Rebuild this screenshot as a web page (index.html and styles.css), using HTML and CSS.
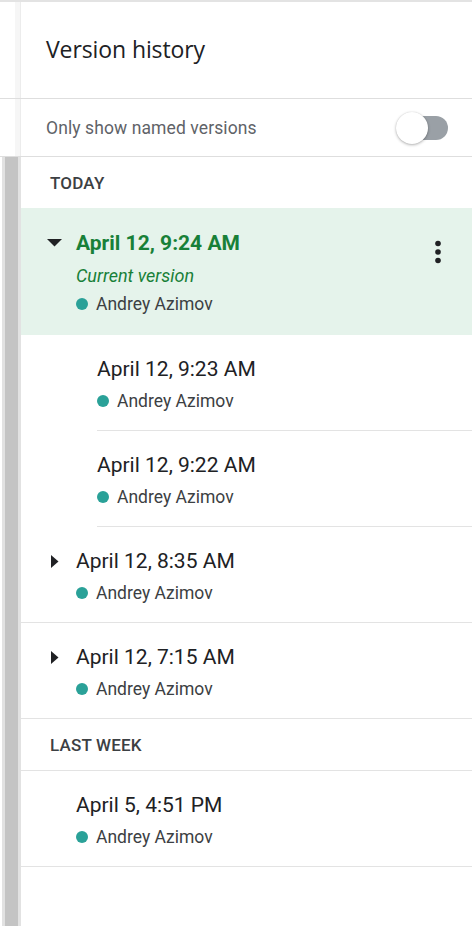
FILE: index.html
```html
<!DOCTYPE html>
<html>
<head>
<meta charset="utf-8">
<link rel="stylesheet" href="styles.css">
</head>
<body>
<div class="page">
  <header class="title-bar">
    <h1 class="title">Version history</h1>
  </header>
  <div class="filter-bar">
    <span class="filter-label">Only show named versions</span>
    <span class="switch"><span class="switch-track"></span><span class="switch-thumb"></span></span>
  </div>
  <div class="body">
    <div class="scroll"></div>
    <div class="list">
      <div class="section first">TODAY</div>

      <div class="row selected">
        <span class="caret down"><svg width="15" height="8" viewBox="0 0 15 8"><polygon points="0,0 15,0 7.5,7.5" fill="#202124"/></svg></span>
        <div class="info">
          <div class="date">April 12, 9:24 AM</div>
          <div class="current">Current version</div>
          <div class="author"><span class="dot"></span>Andrey Azimov</div>
        </div>
        <span class="kebab"><svg width="6" height="24" viewBox="0 0 6 24"><circle cx="3" cy="3.5" r="2.8" fill="#202124"/><circle cx="3" cy="12" r="2.8" fill="#202124"/><circle cx="3" cy="20.5" r="2.8" fill="#202124"/></svg></span>
      </div>

      <div class="row sub">
        <div class="info">
          <div class="date">April 12, 9:23 AM</div>
          <div class="author"><span class="dot"></span>Andrey Azimov</div>
        </div>
      </div>
      <div class="row sub">
        <div class="info">
          <div class="date">April 12, 9:22 AM</div>
          <div class="author"><span class="dot"></span>Andrey Azimov</div>
        </div>
      </div>

      <div class="row bordered">
        <span class="caret right"><svg width="8" height="13" viewBox="0 0 8 13"><polygon points="0,0 7.5,6.5 0,13" fill="#202124"/></svg></span>
        <div class="info">
          <div class="date">April 12, 8:35 AM</div>
          <div class="author"><span class="dot"></span>Andrey Azimov</div>
        </div>
      </div>
      <div class="row bordered">
        <span class="caret right"><svg width="8" height="13" viewBox="0 0 8 13"><polygon points="0,0 7.5,6.5 0,13" fill="#202124"/></svg></span>
        <div class="info">
          <div class="date">April 12, 7:15 AM</div>
          <div class="author"><span class="dot"></span>Andrey Azimov</div>
        </div>
      </div>

      <div class="section bordered">LAST WEEK</div>

      <div class="row bordered">
        <span class="caret"></span>
        <div class="info">
          <div class="date">April 5, 4:51 PM</div>
          <div class="author"><span class="dot"></span>Andrey Azimov</div>
        </div>
      </div>
    </div>
  </div>
</div>
</body>
</html>
```

FILE: styles.css
```css
* { box-sizing: border-box; }
html, body { margin: 0; padding: 0; background: #fff; }
body {
  font-family: Roboto, "Liberation Sans", Arial, sans-serif;
  color: #202124;
  width: 472px;
  height: 926px;
  overflow: hidden;
}
.page {
  display: flex;
  flex-direction: column;
  height: 926px;
  border-top: 2px solid #e3e3e3;
}
.title-bar {
  height: 97px;
  flex: none;
  display: flex;
  align-items: center;
  padding-left: 46px;
  padding-bottom: 3px;
  border-bottom: 1px solid #dedede;
  background: linear-gradient(to right, #fff 0 15px, #f6f6f6 15px 20px, #ececec 20px 21px, #fff 21px);
}
.title {
  margin: 0;
  font-family: "Open Sans", Roboto, sans-serif;
  font-weight: 400;
  font-size: 23px;
  line-height: 28px;
  color: #202124;
  letter-spacing: -0.1px;
}
.filter-bar {
  height: 58px;
  flex: none;
  display: flex;
  align-items: center;
  justify-content: space-between;
  padding: 0 24px 0 46px;
  border-bottom: 1px solid #dedede;
  background: linear-gradient(to right, #fff 0 15px, #f6f6f6 15px 20px, #ececec 20px 21px, #fff 21px);
}
.filter-label {
  font-size: 17.5px;
  color: #5f6368;
  letter-spacing: 0.1px;
}
.switch {
  position: relative;
  width: 52px;
  height: 32px;
  display: block;
}
.switch-track {
  position: absolute;
  left: 12px;
  top: 4px;
  width: 40px;
  height: 24px;
  border-radius: 12px;
  background: #9aa0a6;
}
.switch-thumb {
  position: absolute;
  left: 0;
  top: 0;
  width: 32px;
  height: 32px;
  border-radius: 50%;
  background: #fff;
  box-shadow: 0 1px 3px rgba(0,0,0,0.3), 0 0 1px rgba(0,0,0,0.15);
}
.body {
  flex: 1;
  display: flex;
}
.scroll {
  width: 21px;
  flex: none;
  background: linear-gradient(to right, #fff 0 2px, #e2e2e2 2px 5px, #c4c4c4 5px 18px, #e2e2e2 18px 21px);
}
.list {
  flex: 1;
  display: flex;
  flex-direction: column;
}
.section {
  height: 52px;
  display: flex;
  align-items: center;
  padding-left: 29px;
  font-size: 17px;
  font-weight: 500;
  color: #3c4043;
  letter-spacing: 0.2px;
}
.section.first { height: 51px; }
.bordered { border-bottom: 1px solid #e3e3e3; }
.row {
  display: flex;
  align-items: flex-start;
  padding: 20px 0 0 25px;
  height: 96px;
  flex: none;
}
.row.selected {
  height: 127px;
  background: #e5f3eb;
  padding-right: 24px;
}
.row.sub {
  margin-left: 76px;
  padding-left: 0;
  border-bottom: 1px solid #e3e3e3;
}
.caret {
  width: 30px;
  height: 28px;
  flex: none;
  display: flex;
  align-items: center;
}
.caret.down { padding-left: 1px; padding-top: 2px; }
.caret.right { padding-left: 5px; padding-top: 1px; }
.info { flex: 1; }
.date {
  font-size: 21px;
  line-height: 28px;
  color: #202124;
}
.selected .date {
  font-weight: 700;
  color: #188038;
  margin-top: 1px;
}
.current {
  font-size: 18px;
  font-style: italic;
  line-height: 24px;
  color: #188038;
  margin-top: 7px;
}
.author {
  display: flex;
  align-items: center;
  font-size: 17.5px;
  line-height: 24px;
  color: #3c4043;
  margin-top: 6px;
}
.selected .author { margin-top: 4px; }
.dot {
  width: 12px;
  height: 12px;
  border-radius: 50%;
  background: #2aa198;
  margin-right: 8px;
  flex: none;
}
.kebab {
  width: 6px;
  height: 24px;
  margin-top: 12px;
  display: block;
  margin-right: 7px;
}
.kebab svg { display: block; }
```
